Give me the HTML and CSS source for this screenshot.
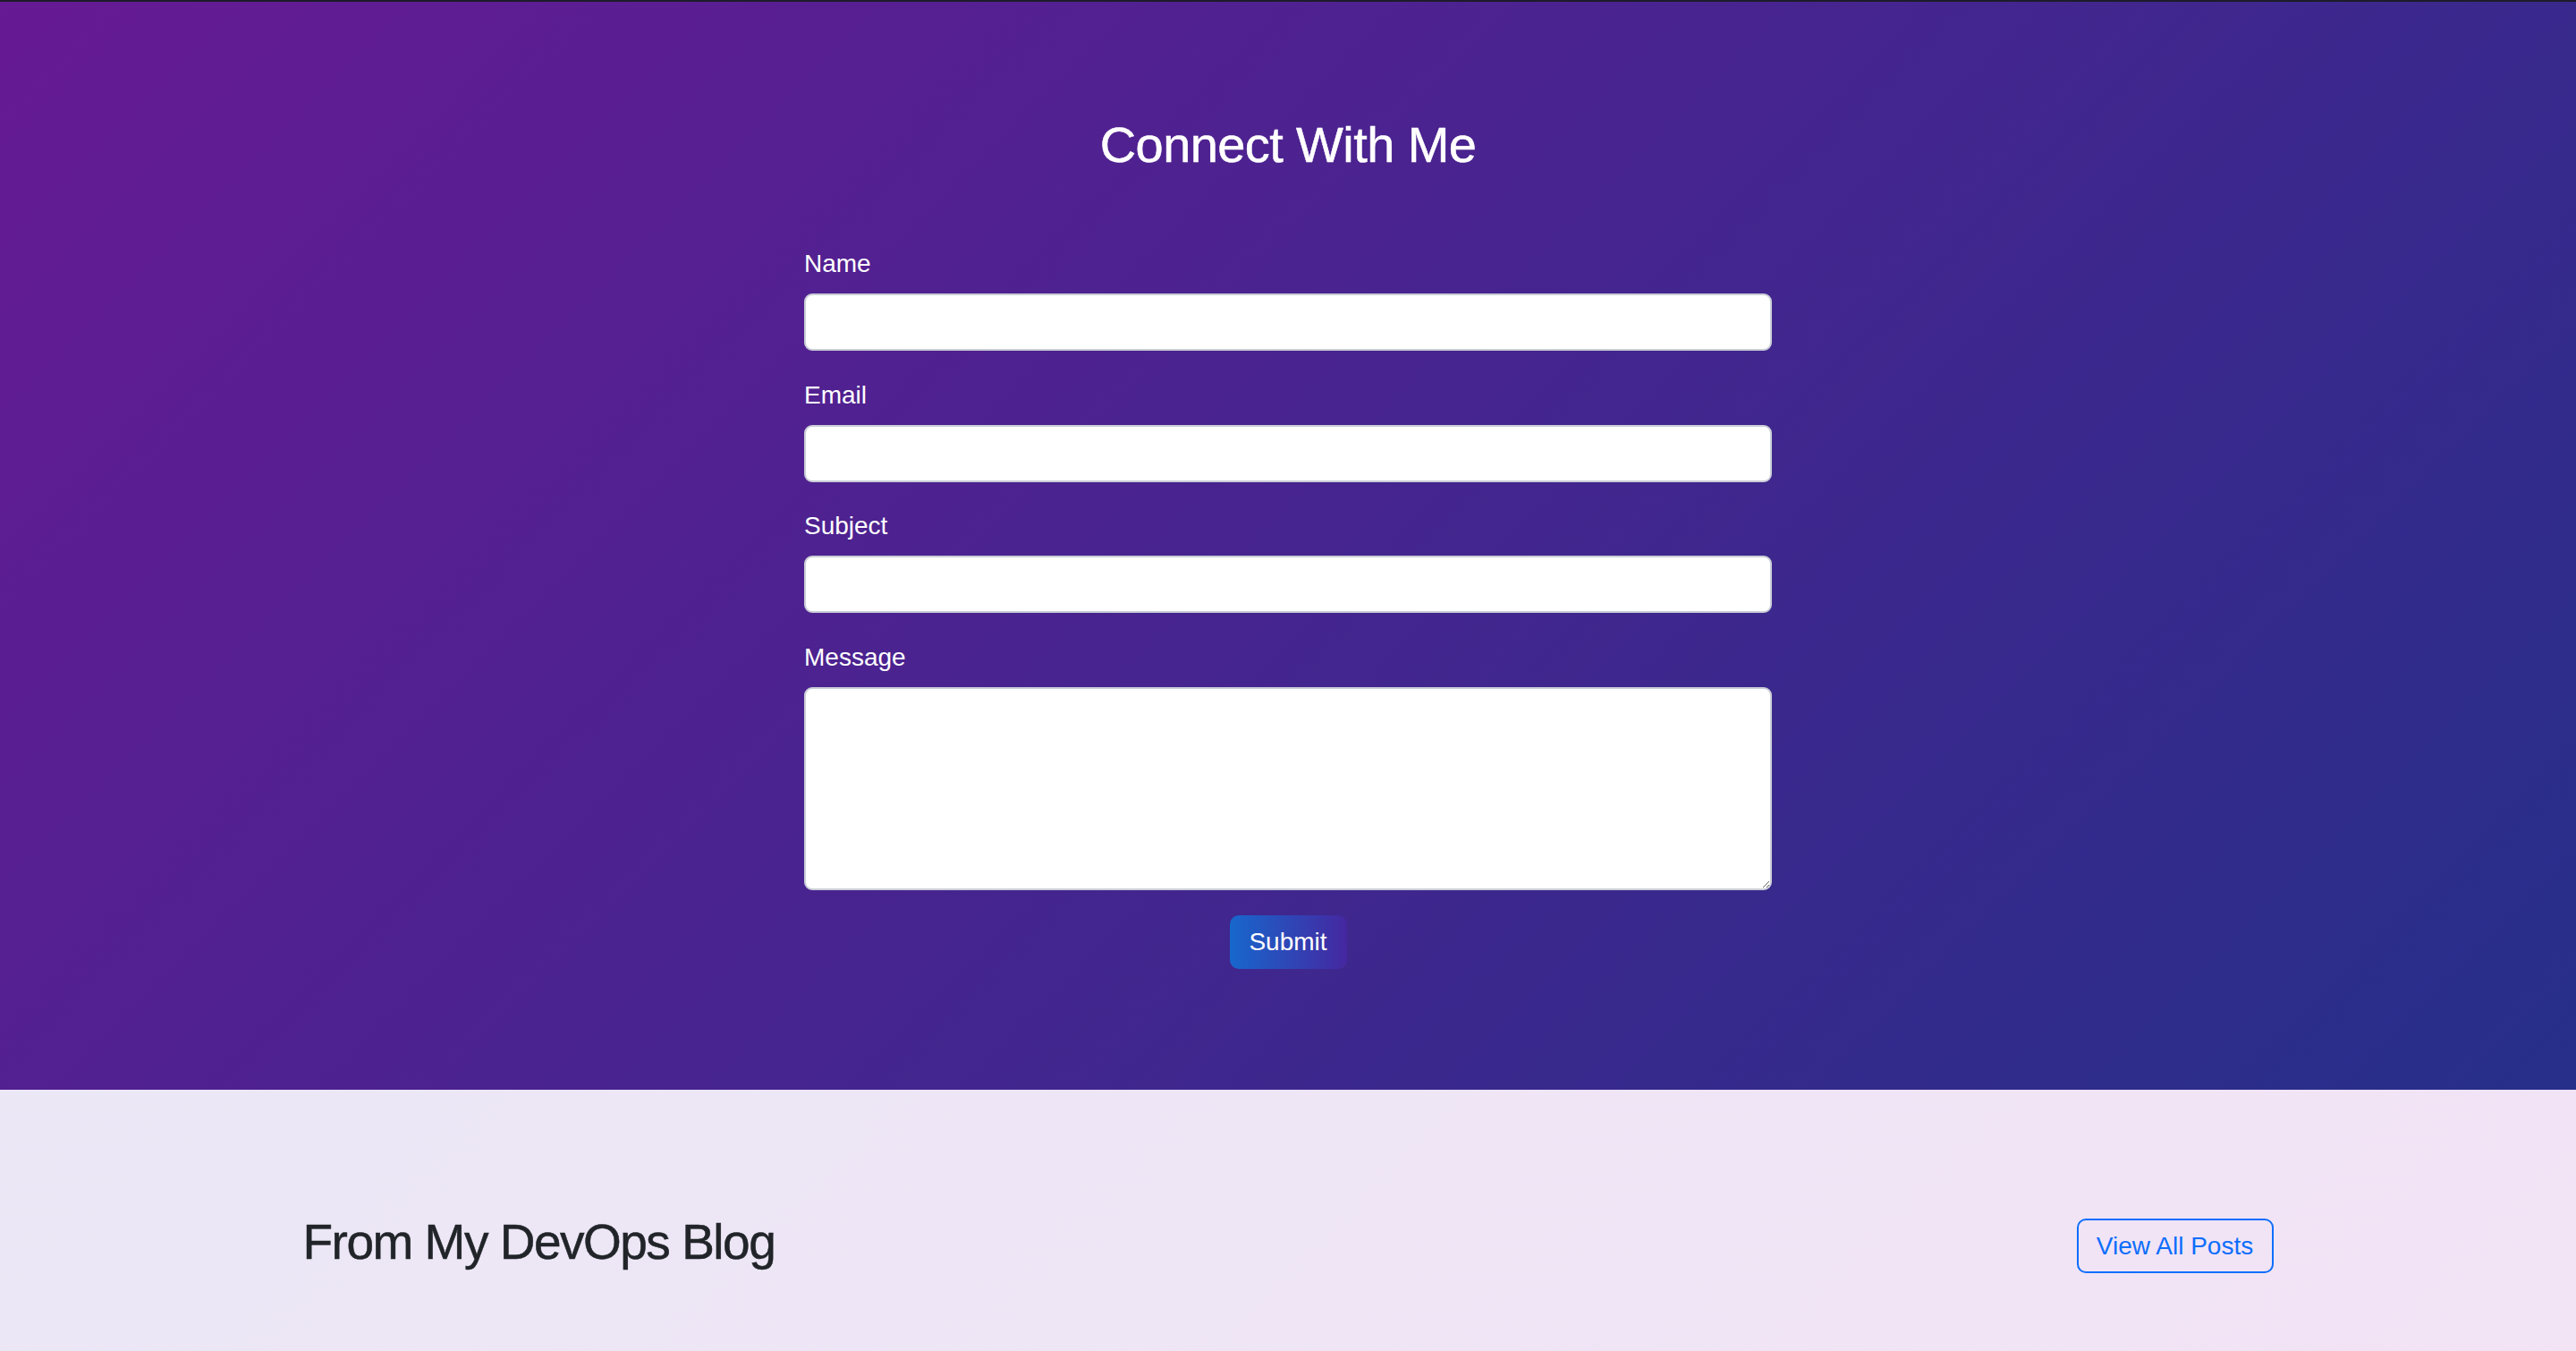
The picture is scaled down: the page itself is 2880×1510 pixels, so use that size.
FILE: index.html
```html
<!DOCTYPE html>
<html lang="en">
<head>
<meta charset="utf-8">
<title>Connect With Me</title>
<link rel="stylesheet" href="styles.css">
</head>
<body>
<section class="contact">
  <h2 class="contact-title">Connect With Me</h2>
  <form class="contact-form">
    <div class="field">
      <label class="field-label" for="name">Name</label>
      <input class="field-input" id="name" type="text">
    </div>
    <div class="field">
      <label class="field-label" for="email">Email</label>
      <input class="field-input" id="email" type="email">
    </div>
    <div class="field">
      <label class="field-label" for="subject">Subject</label>
      <input class="field-input" id="subject" type="text">
    </div>
    <div class="field">
      <label class="field-label" for="message">Message</label>
      <textarea class="field-input field-textarea" id="message"></textarea>
    </div>
    <div class="actions">
      <button class="submit-btn" type="button">Submit</button>
    </div>
  </form>
</section>
<section class="blog">
  <div class="blog-head">
    <h2 class="blog-title">From My DevOps Blog</h2>
    <a class="outline-btn" href="#">View All Posts</a>
  </div>
</section>
</body>
</html>
```
FILE: styles.css
```css
* { box-sizing: border-box; }
html, body { margin: 0; padding: 0; }
body {
  font-family: "Liberation Sans", Arial, sans-serif;
  background: linear-gradient(135deg, #e8e9f6, #f2e3f5);
  min-height: 1510px;
  color: #212529;
}
.contact {
  border-top: 2px solid #1d1b2a;
  background: linear-gradient(135deg, #661a94, #262f8a);
  padding: 126px 0 136px;
  height: 1218px;
}
.contact-title {
  margin: 0 0 79px;
  text-align: center;
  color: #fff;
  font-size: 56px;
  line-height: 67px;
  font-weight: 500;
  letter-spacing: -0.6px;
  -webkit-text-stroke: 0.5px #fff;
}
.contact-form {
  width: 1082px;
  margin: 0 auto;
}
.field { margin-bottom: 28.5px; }
.field-label {
  display: block;
  color: #fff;
  font-size: 28px;
  line-height: 41px;
  margin-bottom: 13px;
}
.field-input {
  display: block;
  width: 100%;
  height: 64px;
  border: 2px solid #c9cdd6;
  border-radius: 9px;
  background: #fff;
  font-family: inherit;
  font-size: 28px;
  padding: 10px 21px;
  outline: none;
}
.field-textarea {
  height: 227px;
  resize: vertical;
}
.actions {
  display: flex;
  justify-content: center;
}
.submit-btn {
  width: 131px;
  height: 60px;
  border: 0;
  border-radius: 10px;
  background: linear-gradient(90deg, #1767cd, #4527a0);
  color: #fff;
  font-family: inherit;
  font-size: 28px;
  line-height: 42px;
  padding: 0;
  cursor: pointer;
}
.blog {
  padding-top: 136px;
}
.blog-head {
  width: 2203px;
  margin: 0 auto;
  display: flex;
  justify-content: space-between;
  align-items: center;
}
.blog-title {
  margin: 0;
  font-size: 55px;
  line-height: 67px;
  font-weight: 500;
  color: #212529;
  letter-spacing: -1.5px;
  -webkit-text-stroke: 0.5px #212529;
}
.outline-btn {
  display: flex;
  align-items: center;
  justify-content: center;
  width: 220px;
  height: 61px;
  margin-top: 8px;
  border: 2px solid #0d6efd;
  border-radius: 10px;
  color: #0d6efd;
  font-size: 28px;
  text-decoration: none;
}
```
